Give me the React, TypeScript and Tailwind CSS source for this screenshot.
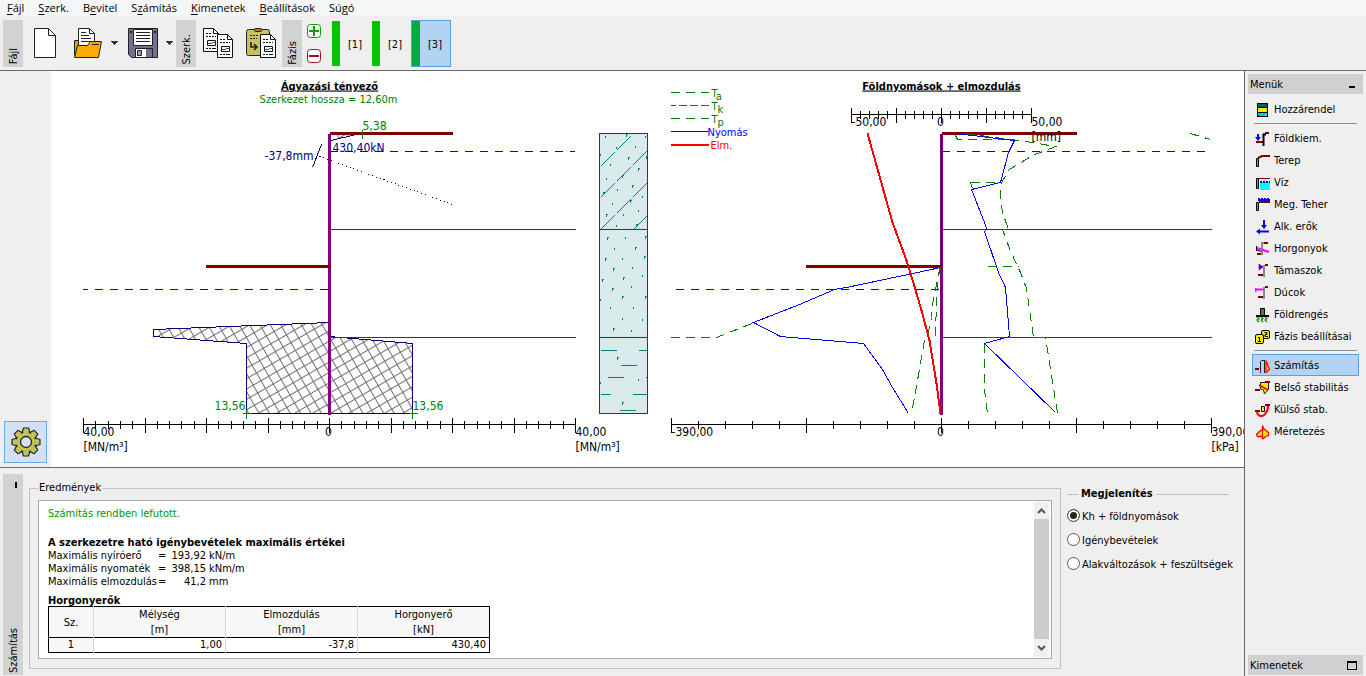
import React from "react";

const MENU: [string, string, string][] = [
  ["", "F", "ájl"],
  ["", "S", "zerk."],
  ["B", "e", "vitel"],
  ["S", "z", "ámítás"],
  ["", "K", "imenetek"],
  ["", "B", "eállítások"],
  ["Sú", "g", "ó"],
];

function StripLabel({ text }: { text: string }) {
  return (
    <div className="flex h-[47px] w-5 items-end justify-center bg-[#d2d2d2] pb-0.5 pl-0.5">
      <span className="rotate-180 text-[11px] leading-4 [writing-mode:vertical-rl]">{text}</span>
    </div>
  );
}

function Caret() {
  return (
    <svg width="7" height="4" viewBox="0 0 7 4" shapeRendering="crispEdges">
      <path d="M0 0h7v1h-7zM1 1h5v1h-5zM2 2h3v1h-3zM3 3h1v1h-1z" fill="#333" />
    </svg>
  );
}

const Page = ({ x, y }: { x: number; y: number }) => (
  <g transform={`translate(${x} ${y})`}>
    <path d="M.5 .5h10l5 5v18h-15z" fill="#fff" stroke="#111" />
    <path d="M10.500 .5v5h5" fill="none" stroke="#111" />
    <path d="M3 5.500h5M3 8.500h10" stroke="#111" strokeDasharray="2 1" />
    <path d="M4.500 12.500h8v5h-8zM3 20.500h2M6 20.500h2M9 20.500h4" fill="none" stroke="#111" />
    <path d="M5 15.500h3l2-1h3" fill="none" stroke="#333" strokeWidth=".9" />
  </g>
);

function NewIcon() {
  return (
    <svg width="30" height="30" viewBox="0 0 30 30">
      <path d="M4.500 .5h14l7 7v22h-21z" fill="#fff" stroke="#222" />
      <path d="M18.500 .5v7h7" fill="none" stroke="#222" />
    </svg>
  );
}

function OpenIcon() {
  return (
    <svg width="30" height="30" viewBox="0 0 30 30">
      <path d="M1.500 27.500v-15h6l2 3h12v12z" fill="#e59a00" stroke="#222" />
      <path d="M5.500 17.500v-17h11l5 5v12z" fill="#fff" stroke="#222" />
      <path d="M16.500 .5v5h5M8 4.500h5M8 7.500h8M8 10.500h10M8 13.500h10" fill="none" stroke="#222" />
      <path d="M1.500 29.500l3-12h10l3-4h11l-3 16z" fill="#fba905" stroke="#222" />
      <path d="M19 16.500h7" stroke="#222" />
    </svg>
  );
}

function SaveIcon() {
  return (
    <svg width="30" height="30" viewBox="0 0 30 30">
      <path d="M.5 .5h29v29h-26l-3-3z" fill="#71718f" stroke="#222" />
      <path d="M5.500 1.500h19v16h-19z" fill="#fff" stroke="#222" />
      <path d="M8 4.500h14M8 7.500h14M8 10.500h14M8 13.500h14" stroke="#222" />
      <path d="M7.500 20.500h17v9h-17z" fill="#fff" stroke="#222" />
      <path d="M18 21h6v8h-6z" fill="#71718f" />
      <path d="M9.500 22.500h4v5h-4z" fill="#9a9ab8" stroke="#222" />
      <path d="M2 3h2v2h-2zM26 3h2v2h-2z" fill="#222" />
    </svg>
  );
}

function CopyIcon() {
  return (
    <svg width="30" height="30" viewBox="0 0 30 30">
      <Page x={0} y={0} />
      <Page x={14} y={6} />
    </svg>
  );
}

function PasteIcon() {
  return (
    <svg width="30" height="30" viewBox="0 0 30 30">
      <rect x=".5" y="1.500" width="23" height="26" rx="2" fill="#c6c25d" stroke="#222" />
      <rect x="8.500" y=".5" width="7" height="3" rx="1" fill="#b5762a" stroke="#222" />
      <path d="M4 7.500h8M4 10.500h7" stroke="#222" strokeDasharray="2 1" />
      <path d="M5 14v5h6M8 16l3 3-3 3" fill="none" stroke="#222" strokeWidth="1.600" />
      <Page x={14} y={6} />
    </svg>
  );
}

function PhaseSign({ plus }: { plus: boolean }) {
  const color = plus ? "#0a9a0a" : "#a50f1c";
  return (
    <svg width="14" height="14" viewBox="0 0 14 14">
      <rect x=".5" y=".5" width="13" height="13" rx="3" fill="#fff" stroke={color} />
      <path d={plus ? "M2 7h10M7 2v10" : "M2 7h10"} stroke={color} strokeWidth="2" />
    </svg>
  );
}

function Gear() {
  const teeth = [0, 45, 90, 135, 180, 225, 270, 315];
  return (
    <svg width="30" height="30" viewBox="-15 -15 30 30">
      {teeth.map((a) => (
        <path key={a} transform={`rotate(${a})`} d="M-4 -9l1.500 -5h5l1.500 5" fill="#c4c05c" stroke="#222" strokeWidth="1.200" strokeLinejoin="round" />
      ))}
      <circle r="10" fill="#c4c05c" stroke="#222" strokeWidth="1.200" />
      {teeth.map((a) => (
        <path key={a} transform={`rotate(${a})`} d="M-3 -8l1 -5h4l1 5z" fill="#c4c05c" />
      ))}
      <circle r="5.500" fill="#cfe1f2" stroke="#222" strokeWidth="1.300" />
    </svg>
  );
}

const BROWN = "#800000";

const ICONS: Record<string, React.ReactNode> = {
  assign: (
    <>
      <rect x="2" y="1" width="11" height="14" fill="#000" />
      <rect x="3" y="2" width="9" height="3" fill="#006868" />
      <rect x="3" y="6" width="9" height="4" fill="#ffe800" />
      <rect x="3" y="11" width="9" height="3" fill="#00e8f0" />
      <path d="M3 14l3-3M7 14l3-3M4 5l3-3M8 5l3-3" stroke="#024" strokeWidth=".6" />
    </>
  ),
  excavation: (
    <>
      <path d="M3 3v4" stroke="#00f" strokeWidth="2" />
      <path d="M0 6h6l-3 4z" fill="#00f" />
      <path d="M1 10h7v2H1zM10 1h4v2h-4z" fill={BROWN} />
      <path d="M8.500 15V3.500H11" fill="none" stroke="#000" strokeWidth="2" />
    </>
  ),
  terrain: (
    <>
      <path d="M1.500 5.500h2v8h-2z" fill="#888" stroke="#000" />
      <path d="M3 5l4-2h8" fill="none" stroke={BROWN} strokeWidth="2" />
    </>
  ),
  water: (
    <>
      <rect x="5" y="7" width="10" height="8" fill="#00ffff" />
      <path d="M1.500 3.500h2v10h-2z" fill="#888" stroke="#000" />
      <path d="M4 3.500h11" stroke={BROWN} />
      <path d="M5 7h10" stroke="#00f" strokeWidth="2" strokeDasharray="2 1" />
    </>
  ),
  surcharge: (
    <>
      <path d="M1.500 5.500h2v8h-2z" fill="#888" stroke="#000" />
      <path d="M3 2h12v2H3z" fill="#00f" />
      <path d="M3 1h2v1h-2zM6 1h2v1h-2zM9 1h2v1h-2zM12 1h2v1h-2z" fill="#00f" />
      <path d="M4 5h11" stroke={BROWN} strokeWidth="2" />
    </>
  ),
  forces: (
    <>
      <path d="M9 1v6" stroke="#00f" strokeWidth="2" />
      <path d="M6 6h6l-3 4zM1 12.500l4-3v6z" fill="#00f" />
      <path d="M4 12.500h10" stroke="#00f" strokeWidth="2" />
    </>
  ),
  anchors: (
    <>
      <path d="M9 2H7v12" fill="none" stroke="#888" strokeWidth="2" />
      <path d="M9 2h4M2 13h4" stroke={BROWN} strokeWidth="2" />
      <path d="M2 7l12 4" fill="none" stroke="#f0f" strokeWidth="2.200" />
      <path d="M1.500 5v5M2 9l4 1.500" fill="none" stroke="#000" />
    </>
  ),
  supports: (
    <>
      <path d="M9 2v12" stroke="#888" strokeWidth="2" />
      <path d="M10 2h3M3 12h5" stroke={BROWN} strokeWidth="2" />
      <path d="M4 1l4 3-4 3z" fill="#00f" stroke="#a0a" strokeWidth=".8" />
    </>
  ),
  struts: (
    <>
      <path d="M9 2v12" stroke="#888" strokeWidth="2" />
      <path d="M10 2h3M3 12h5" stroke={BROWN} strokeWidth="2" />
      <path d="M0 4.500h8M.5 3v4" stroke="#f0f" strokeWidth="2" />
    </>
  ),
  quake: (
    <>
      <path d="M5.500 1.500h4v7h-4z" fill="#666" stroke="#000" />
      <path d="M1 9h13" stroke="#000" strokeWidth="2" />
      <path d="M2 10l2 1.500-2 1.500 2 2M6 10l2 1.500-2 1.500 2 2M10 10l2 1.500-2 1.500 2 2" fill="none" stroke="#080" strokeWidth="1.200" />
    </>
  ),
  phase: (
    <>
      <rect x="6.500" y="1.500" width="8" height="8" rx="1.500" fill="#ffe800" stroke="#000" />
      <rect x=".5" y="5.500" width="8" height="9" rx="1.500" fill="#ffe800" stroke="#000" />
      <path d="M3 8.500h1.500v4M3 12.500h3M9.500 3.500h2.500v2h-2v2h3" fill="none" stroke="#000" />
    </>
  ),
  analysis: (
    <>
      <path d="M0 11h4" stroke={BROWN} strokeWidth="2" />
      <path d="M5.500 15V3.500l1-1h2.500" fill="none" stroke="#223" />
      <path d="M9.500 2v13" stroke="#223" />
      <path d="M11 2.500l3.500 9-3.500 3z" fill="#ffe800" stroke="#f00" strokeWidth="1.200" />
    </>
  ),
  internal: (
    <>
      <path d="M5.500 2.500h8v7l-4 4.500-1-4-3-1z" fill="#ffe800" stroke="#222" />
      <path d="M4 5l9 5" stroke="#f00" strokeWidth="1.600" />
      <path d="M0 10h5M10 2h5" stroke={BROWN} strokeWidth="2" />
    </>
  ),
  external: (
    <>
      <path d="M2 10c1 5 6 5 8 2 2-2 3-4 3-8" fill="none" stroke="#f00" strokeWidth="2" />
      <path d="M0 9h5M10 3h5" stroke={BROWN} strokeWidth="2" />
      <path d="M6.500 4.500h3v5h-3z" fill="#ffe800" stroke="#000" />
    </>
  ),
  design: (
    <>
      <path d="M7.500 1.500l1 3 5 4v3l-3 1-2 2h-1v-2h-5l-1-2 4-4h2z" fill="#ffe800" stroke="#f00" strokeWidth="1.300" />
      <path d="M7.500 2v12" stroke="#f00" />
    </>
  ),
};

function SideItem({ icon, text, active = false }: { icon: string; text: string; active?: boolean }) {
  return (
    <button
      type="button"
      className={
        active
          ? "flex h-[22px] items-center gap-[3px] border border-[#5b9fe3] bg-[#b2d3f2] pl-[2px] pt-0.5 text-left"
          : "flex h-[22px] items-center gap-[3px] border border-transparent pl-[2px] pt-0.5 text-left"
      }
    >
      <svg className="shrink-0" width="16" height="16" viewBox="0 0 16 16">{ICONS[icon]}</svg>
      <span className="whitespace-nowrap">{text}</span>
    </button>
  );
}

const SIDE_ITEMS: [string, string][] = [
  ["excavation", "Földkiem."],
  ["terrain", "Terep"],
  ["water", "Víz"],
  ["surcharge", "Meg. Teher"],
  ["forces", "Alk. erők"],
  ["anchors", "Horgonyok"],
  ["supports", "Támaszok"],
  ["struts", "Dúcok"],
  ["quake", "Földrengés"],
  ["phase", "Fázis beállításai"],
];

interface AxisProps {
  x: number;
  y: number;
  step: number;
  count: number;
  major: number;
}

function Axis({ x, y, step, count, major }: AxisProps) {
  const ticks = Array.from({ length: count + 1 }, (_, i) => {
    const tx = Math.round(x + i * step);
    return i % major === 0 ? `M${tx} ${y - 7}v15` : `M${tx} ${y - 4}v8`;
  });
  return <path d={`M${x} ${y}h${step * count}${ticks.join("")}`} stroke="#000" fill="none" />;
}

const DOTS: [number, number][] = [
  [605, 135], [616, 146], [635, 145], [610, 163], [600, 153], [606, 177], [617, 188], [612, 202], [642, 195],
  [638, 209], [623, 213], [616, 224], [645, 135], [625, 236], [614, 247], [622, 257], [632, 266], [642, 274],
  [631, 285], [600, 298], [610, 306], [633, 306], [622, 317], [642, 318], [631, 329], [638, 378], [600, 381],
];
const GRAINS: [number, number][] = [
  [625, 134], [627, 157], [637, 168], [631, 185], [621, 175], [645, 156], [629, 200], [605, 214], [635, 224],
  [602, 192], [606, 237], [644, 236], [634, 247], [643, 256], [604, 258], [612, 268], [622, 277], [601, 279],
  [611, 288], [621, 296], [644, 296], [612, 328], [616, 357], [621, 402],
];

function SoilColumn() {
  return (
    <g fill="none" stroke="#008080">
      <rect x="599" y="133" width="48" height="280" fill="#d8ebea" stroke="none" />
      <path d="M600 166l32-32M600 197l47-47M600 229l47-47M633 229l14-14" strokeDasharray="20 3" />
      <path d="M600 350h16M638 350h9M620 365h16M607 377h16M645 377h2M600 394h10M632 394h15M619 410h16" />
      <path d={DOTS.map(([x, y]) => `M${x} ${y}v2`).join("")} />
      <path d={GRAINS.map(([x, y]) => `M${x} ${y}h2M${x + 1} ${y}v2`).join("")} />
      <path d="M599 133h48v280h-48zM599 229h48M599 337h48" stroke="#800080" />
    </g>
  );
}

function Chart() {
  return (
    <svg
      className="block h-full w-full bg-white text-[12px]"
      viewBox="50.5 70.5 1193 396"
      preserveAspectRatio="xMidYMid meet"
      shapeRendering="crispEdges"
      role="img"
      aria-label="Ágyazási tényező, Földnyomások + elmozdulás"
    >
      <defs>
        <pattern id="hatch" width="9" height="9" patternUnits="userSpaceOnUse" patternTransform="rotate(60)">
          <path d="M0 0H9M0 0V9" stroke="#707070" strokeWidth="2" fill="none" shapeRendering="auto" />
        </pattern>
      </defs>

      <g fill="url(#hatch)" stroke="#000080">
        <path d="M329 322L153 329V336L246 343V413H329" />
        <path d="M329 336L412 343V413H329" />
        <path d="M330 140L356 134H330" />
      </g>
      <g stroke="#800080" fill="none">
        <path d="M330 229H575M330 337H575M942 229H1211M942 337H1211" />
        <path d="M329 133V414" strokeWidth="3" />
        <path d="M941 133V414" strokeWidth="3" />
      </g>
      <g stroke="#0000ff" strokeDasharray="8 7" fill="none">
        <path d="M329 151H574M675 289H939M941 151H1210" />
        <path d="M82 289H328" strokeDashoffset="3" />
      </g>
      <path d="M329 133H452M205 266H330M941 133H1076M805 266H941" stroke="#800000" strokeWidth="3" />
      <path d="M312 167L321 144" stroke="#000080" />
      <path d="M319 156L452 204" stroke="#000080" strokeDasharray="1 3" />
      <path d="M362 129v9M242 413h9M246 409v9M408 413h9M412 409v9" stroke="#008000" />

      <SoilColumn />

      <g fill="none" stroke="#008000" strokeDasharray="9 6">
        <path d="M670 92H708M670 118H708" />
        <path d="M670 105H708" strokeDasharray="8 3" strokeDashoffset="3" />
        <path d="M955 135L957 139H1014M970 182H1001M970 182L972 188" />
        <path d="M965 133L1025 141L1055 146L1032 155L1009 169L1001 182L1000 197L1002 212L1008 229H1002L1009 248L1017 266L1020 272L1026 288L1033 337H1045L1057 413" />
        <path d="M987 266H1018M985 337H1009M984 343V390L987 413M1190 133L1210 139" />
        <path d="M670 337H716L754 322" />
        <path d="M940 267L933 297L931 317L927 335L924 340L917 380L911 413" />
        <path d="M939 267L936 297L935 337" />
      </g>
      <g fill="none" stroke="#0000ff">
        <path d="M670 131H708M941 133V266" />
        <path d="M940 267L917 272L846 287L834 289L799 304L753 322L780 336L863 343L882 369L892 387L908 413" />
        <path d="M955 133L1014 140L1008 152L1000 182L971 189L984 222L986 228L984 231L998 272L1005 287L1009 336L984 343L1055 412" />
      </g>
      <path d="M941 337V413" stroke="#006040" strokeDasharray="9 6" />
      <g fill="none" stroke="#ff0000" strokeWidth="2">
        <path d="M670 144H708" />
        <path d="M867 133L878 172L892 222L906 260L914 286L921 310L929 340L936 383L940 413" />
      </g>

      <Axis x={83} y={424} step={12.3} count={40} major={5} />
      <Axis x={671} y={424} step={27} count={20} major={5} />
      <Axis x={851} y={114} step={9} count={20} major={5} />

      <g>
        <g textAnchor="middle" className="text-[11px]">
          <text x="329" y="89" fontWeight="bold" textDecoration="underline">Ágyazási tényező</text>
          <text x="328" y="102" fill="#008000">Szerkezet hossza = 12,60m</text>
          <text x="941" y="89" fontWeight="bold" textDecoration="underline">Földnyomások + elmozdulás</text>
        </g>
        <g>
          <text x="83" y="435">40,00</text>
          <text x="83" y="450">[MN/m³]</text>
          <text x="575" y="435">40,00</text>
          <text x="575" y="450">[MN/m³]</text>
          <text x="671" y="435">-390,00</text>
          <text x="1211" y="435">390,00</text>
          <text x="1211" y="450">[kPa]</text>
          <text x="851" y="125">-50,00</text>
          <text x="1031" y="125">50,00</text>
          <text x="1031" y="140">[mm]</text>
          <text x="328" y="435" textAnchor="middle">0</text>
          <text x="940" y="435" textAnchor="middle">0</text>
          <text x="940" y="125" textAnchor="middle">0</text>
        </g>
        <g fill="#008000">
          <text x="362" y="129">5,38</text>
          <text x="245" y="409" textAnchor="end">13,56</text>
          <text x="412" y="409">13,56</text>
        </g>
        <g fill="#000080">
          <text x="332" y="151">430,40kN</text>
          <text x="313" y="159" textAnchor="end">-37,8mm</text>
        </g>
        <g className="text-[11px]">
          <g fill="#008000">
            <text x="711" y="96">T<tspan dy="3">a</tspan></text>
            <text x="711" y="109">T<tspan dy="3">k</tspan></text>
            <text x="711" y="122">T<tspan dy="3">p</tspan></text>
          </g>
          <text x="707" y="135" fill="#0000ff">Nyomás</text>
          <text x="710" y="148" fill="#ff0000">Elm.</text>
        </g>
      </g>
    </svg>
  );
}

const MAXIMA: [string, string, string][] = [
  ["Maximális nyíróerő", "193,92", "kN/m"],
  ["Maximális nyomaték", "398,15", "kNm/m"],
  ["Maximális elmozdulás", "41,2", "mm"],
];

const COLUMNS: [string, string][] = [
  ["Mélység", "[m]"],
  ["Elmozdulás", "[mm]"],
  ["Horgonyerő", "[kN]"],
];

const VIEWS = ["Kh + földnyomások", "Igénybevételek", "Alakváltozások + feszültségek"];

function Results() {
  return (
    <div className="flex h-full border border-[#a9a9a9] bg-white">
      <div className="min-w-0 flex-1 overflow-hidden pl-[9px] pt-[6px] leading-[13px]">
        <p className="text-[#009600]">Számítás rendben lefutott.</p>
        <h2 className="pt-4 font-bold">A szerkezetre ható igénybevételek maximális értékei</h2>
        <dl className="grid grid-cols-[110px_12px_36px_1fr]">
          {MAXIMA.map(([label, value, unit]) => (
            <React.Fragment key={label}>
              <dt className="whitespace-nowrap">{label}</dt>
              <dd>=</dd>
              <dd className="text-right">{value}</dd>
              <dd className="pl-[3px]">{unit}</dd>
            </React.Fragment>
          ))}
        </dl>
        <h2 className="pt-[6px] font-bold">Horgonyerők</h2>
        <table className="-mt-px w-[442px] table-fixed border-collapse border border-black leading-[15px]">
          <thead className="bg-[#f7f7f7]">
            <tr>
              <th className="w-[45px] border-r border-[#d5d5d5] font-normal">Sz.</th>
              {COLUMNS.map(([name, unit]) => (
                <th key={name} className="border-l border-[#d5d5d5] font-normal">
                  {name}
                  <br />
                  {unit}
                </th>
              ))}
            </tr>
          </thead>
          <tbody>
            <tr className="border-t border-black text-right leading-[14px]">
              <td className="border-r border-[#d5d5d5] bg-[#f7f7f7] text-center">1</td>
              <td className="border-r border-[#d5d5d5] pr-[3px]">1,00</td>
              <td className="border-r border-[#d5d5d5] pr-[3px]">-37,8</td>
              <td className="pr-[3px]">430,40</td>
            </tr>
          </tbody>
        </table>
      </div>
      <div className="my-px mr-0.5 flex w-[15px] flex-col bg-[#f0f0f0]">
        <button type="button" aria-label="Fel" className="flex h-[17px] items-center justify-center">
          <svg width="9" height="6" viewBox="0 0 9 6"><path d="M1 5l3.500-3.500L8 5" fill="none" stroke="#555" strokeWidth="2" /></svg>
        </button>
        <div className="flex-1 bg-[#cdcdcd]" />
        <button type="button" aria-label="Le" className="flex h-[18px] items-center justify-center">
          <svg width="9" height="6" viewBox="0 0 9 6"><path d="M1 1l3.500 3.500L8 1" fill="none" stroke="#555" strokeWidth="2" /></svg>
        </button>
      </div>
    </div>
  );
}

export default function App() {
  return (
    <div className="flex h-screen flex-col overflow-hidden bg-[#efefef] font-['DejaVu_Sans_Condensed','Noto_Sans',sans-serif] text-[11px] leading-4 text-black">
      <nav className="flex h-4 items-center gap-[14px] bg-[#f5f6f8] pl-[7px] font-['Open_Sans','Noto_Sans',sans-serif]">
        {MENU.map(([pre, key, post]) => (
          <button key={key + post} type="button" className="whitespace-nowrap">
            {pre}
            <span className="underline underline-offset-2">{key}</span>
            {post}
          </button>
        ))}
      </nav>
      <header className="flex h-[55px] items-center border-b border-[#6a6a6a] pl-[3px]">
        <StripLabel text="Fájl" />
        <button type="button" aria-label="Új" className="ml-[7px]"><NewIcon /></button>
        <button type="button" aria-label="Megnyitás" className="ml-[13px]"><OpenIcon /></button>
        <button type="button" aria-label="Legutóbbi" className="ml-2"><Caret /></button>
        <button type="button" aria-label="Mentés" className="ml-[10px]"><SaveIcon /></button>
        <button type="button" aria-label="Mentés másként" className="ml-2"><Caret /></button>
        <div className="ml-[3px]"><StripLabel text="Szerk." /></div>
        <button type="button" aria-label="Másolás" className="ml-[7px]"><CopyIcon /></button>
        <button type="button" aria-label="Beillesztés" className="ml-[13px]"><PasteIcon /></button>
        <div className="ml-[6px]"><StripLabel text="Fázis" /></div>
        <div className="ml-[5px] flex flex-col gap-[11px]">
          <button type="button" aria-label="Fázis hozzáadása"><PhaseSign plus /></button>
          <button type="button" aria-label="Fázis törlése"><PhaseSign plus={false} /></button>
        </div>
        <div className="ml-[10px] flex items-center">
          <button type="button" className="flex h-[47px] w-10 items-center border border-transparent">
            <span className="h-[45px] w-2 bg-[#00c400]" />
            <span className="flex-1 pt-[3px]">[1]</span>
          </button>
          <button type="button" className="flex h-[47px] w-10 items-center border border-transparent">
            <span className="h-[45px] w-2 bg-[#00c400]" />
            <span className="flex-1 pt-[3px]">[2]</span>
          </button>
          <button type="button" className="flex h-[47px] w-10 items-center border border-[#5b9fe3] bg-[#b2d3f2]">
            <span className="h-[45px] w-2 bg-[#00ae40]" />
            <span className="flex-1 pt-[3px]">[3]</span>
          </button>
        </div>
      </header>

      <div className="flex min-h-0 flex-1">
        <div className="flex min-w-0 flex-1 flex-col">
          <div className="flex min-h-0 flex-1">
            <div className="flex w-[51px] shrink-0 items-end pb-1 pl-1">
              <button type="button" aria-label="Beállítások" className="flex h-[42px] w-[43px] items-center justify-center border border-[#6fa8e2] bg-[#cfe1f2]">
                <Gear />
              </button>
            </div>
            <main className="min-w-0 flex-1"><Chart /></main>
          </div>

          <section className="flex h-[209px] shrink-0 border-t border-[#6a6a6a] pl-[3px]">
            <div className="mb-px mt-[6px] flex w-5 flex-col items-center justify-between bg-[#d2d2d2] pb-0.5 pl-0.5 pt-2">
              <button type="button" aria-label="Összecsukás" className="ml-1 h-[6px] w-0.5 bg-black" />
              <span className="rotate-180 [writing-mode:vertical-rl]">Számítás</span>
            </div>
            <fieldset className="mb-[7px] ml-[6px] mt-3 min-w-0 flex-1 border border-[#c2c2c2] px-2 pb-[9px] pt-1">
              <legend className="px-px">Eredmények</legend>
              <Results />
            </fieldset>
            <fieldset className="ml-[6px] mr-[15px] mt-[18px] w-[162px] min-w-0 shrink-0">
              <legend className="flex w-full items-center gap-[3px] font-bold">
                <span className="h-px w-[11px] bg-[#c2c2c2]" />
                Megjelenítés
                <span className="h-px flex-1 bg-[#c2c2c2]" />
              </legend>
              <div className="flex flex-col gap-2 pt-[7px]">
                {VIEWS.map((view, i) => (
                  <label key={view} className="flex items-start gap-[2px] whitespace-nowrap">
                    <input
                      type="radio"
                      name="view"
                      defaultChecked={i === 0}
                      className="size-[13px] shrink-0 appearance-none rounded-full border border-[#555] bg-white checked:bg-[#222] checked:shadow-[inset_0_0_0_2px_#fff]"
                    />
                    {view}
                  </label>
                ))}
              </div>
            </fieldset>
          </section>
        </div>

        <aside className="flex w-[122px] shrink-0 flex-col border-l border-[#6a6a6a] pb-px pl-[3px] pr-[3px] pt-[3px]">
          <div className="flex h-5 items-center justify-between bg-[#d0d0d0] pl-0.5 pr-2 pt-0.5">
            Menük
            <button type="button" aria-label="Kis méret" className="mt-1 h-0.5 w-[6px] bg-black" />
          </div>
          <div className="flex flex-1 flex-col px-1">
            <div className="mt-1 flex flex-col"><SideItem icon="assign" text="Hozzárendel" /></div>
            <hr className="mx-0.5 mb-[3px] mt-[3px] border-[#909090]" />
            {SIDE_ITEMS.map(([icon, text]) => (
              <SideItem key={icon} icon={icon} text={text} />
            ))}
            <hr className="mx-0.5 my-[3px] border-[#909090]" />
            <SideItem icon="analysis" text="Számítás" active />
            <SideItem icon="internal" text="Belső stabilitás" />
            <SideItem icon="external" text="Külső stab." />
            <SideItem icon="design" text="Méretezés" />
          </div>
          <div className="flex h-5 items-center justify-between bg-[#d0d0d0] pl-0.5 pr-[6px] pt-0.5">
            Kimenetek
            <button type="button" aria-label="Visszaállítás" className="mb-0.5 h-[9px] w-[10px] border border-t-2 border-black" />
          </div>
        </aside>
      </div>
    </div>
  );
}
